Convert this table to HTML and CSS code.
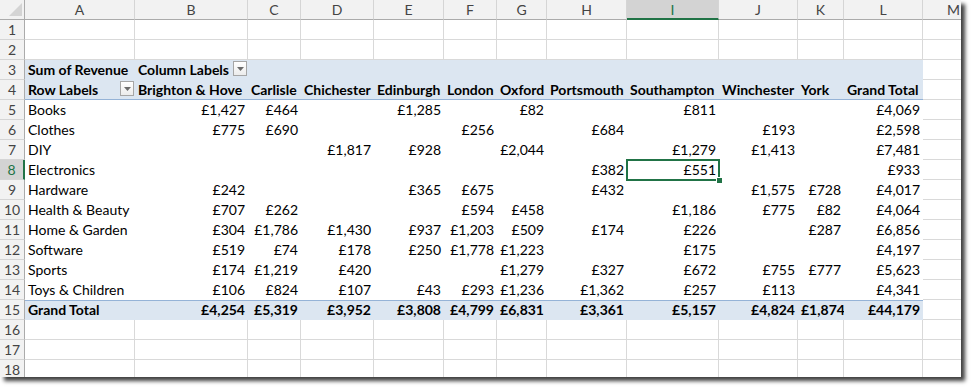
FILE: index.html
```html
<!DOCTYPE html>
<html lang="en">
<head>
<meta charset="utf-8">
<title>Pivot table – Sum of Revenue</title>
<link rel="stylesheet" href="styles.css">
</head>
<body>
<div class="sheet">
  <div class="row hrow">
    <div class="corner"><svg width="25" height="20" viewBox="0 0 25 20"><polygon points="22,3 22,16 9,16" fill="#d4d4d4"/></svg></div>
    <div class="ch">A</div><div class="ch">B</div><div class="ch">C</div><div class="ch">D</div><div class="ch">E</div><div class="ch">F</div><div class="ch">G</div><div class="ch">H</div><div class="ch ch-sel">I</div><div class="ch">J</div><div class="ch">K</div><div class="ch">L</div><div class="ch">M</div>
  </div>

  <div class="row"><div class="rh">1</div><div class="c"></div><div class="c"></div><div class="c"></div><div class="c"></div><div class="c"></div><div class="c"></div><div class="c"></div><div class="c"></div><div class="c"></div><div class="c"></div><div class="c"></div><div class="c"></div><div class="c"></div></div>
  <div class="row"><div class="rh">2</div><div class="c"></div><div class="c"></div><div class="c"></div><div class="c"></div><div class="c"></div><div class="c"></div><div class="c"></div><div class="c"></div><div class="c"></div><div class="c"></div><div class="c"></div><div class="c"></div><div class="c"></div></div>

  <div class="row"><div class="rh">3</div>
    <div class="b bold">Sum of Revenue</div>
    <div class="b bold flexcell">Column Labels<span class="dd"><svg width="7" height="4" viewBox="0 0 7 4"><polygon points="0,0 7,0 3.5,4" fill="#6b6b6b"/></svg></span></div>
    <div class="b"></div><div class="b"></div><div class="b"></div><div class="b"></div><div class="b"></div><div class="b"></div><div class="b"></div><div class="b"></div><div class="b"></div><div class="b"></div><div class="c"></div>
  </div>
  <div class="row"><div class="rh">4</div>
    <div class="b hb bold flexcell">Row Labels<span class="dd"><svg width="7" height="4" viewBox="0 0 7 4"><polygon points="0,0 7,0 3.5,4" fill="#6b6b6b"/></svg></span></div>
    <div class="b hb bold">Brighton &amp; Hove</div><div class="b hb bold">Carlisle</div><div class="b hb bold">Chichester</div><div class="b hb bold">Edinburgh</div><div class="b hb bold">London</div><div class="b hb bold">Oxford</div><div class="b hb bold">Portsmouth</div><div class="b hb bold">Southampton</div><div class="b hb bold">Winchester</div><div class="b hb bold">York</div><div class="b hb bold">Grand Total</div><div class="c"></div>
  </div>

  <div class="row"><div class="rh">5</div><div class="p">Books</div><div class="p n">£1,427</div><div class="p n">£464</div><div class="p n"></div><div class="p n">£1,285</div><div class="p n"></div><div class="p n">£82</div><div class="p n"></div><div class="p n">£811</div><div class="p n"></div><div class="p n"></div><div class="p n">£4,069</div><div class="c"></div></div>
  <div class="row"><div class="rh">6</div><div class="p">Clothes</div><div class="p n">£775</div><div class="p n">£690</div><div class="p n"></div><div class="p n"></div><div class="p n">£256</div><div class="p n"></div><div class="p n">£684</div><div class="p n"></div><div class="p n">£193</div><div class="p n"></div><div class="p n">£2,598</div><div class="c"></div></div>
  <div class="row"><div class="rh">7</div><div class="p">DIY</div><div class="p n"></div><div class="p n"></div><div class="p n">£1,817</div><div class="p n">£928</div><div class="p n"></div><div class="p n">£2,044</div><div class="p n"></div><div class="p n">£1,279</div><div class="p n">£1,413</div><div class="p n"></div><div class="p n">£7,481</div><div class="c"></div></div>
  <div class="row"><div class="rh rh-sel">8</div><div class="p">Electronics</div><div class="p n"></div><div class="p n"></div><div class="p n"></div><div class="p n"></div><div class="p n"></div><div class="p n"></div><div class="p n">£382</div><div class="p n active">£551<span class="sel"><span class="handle"></span></span></div><div class="p n"></div><div class="p n"></div><div class="p n">£933</div><div class="c"></div></div>
  <div class="row"><div class="rh">9</div><div class="p">Hardware</div><div class="p n">£242</div><div class="p n"></div><div class="p n"></div><div class="p n">£365</div><div class="p n">£675</div><div class="p n"></div><div class="p n">£432</div><div class="p n"></div><div class="p n">£1,575</div><div class="p n">£728</div><div class="p n">£4,017</div><div class="c"></div></div>
  <div class="row"><div class="rh">10</div><div class="p">Health &amp; Beauty</div><div class="p n">£707</div><div class="p n">£262</div><div class="p n"></div><div class="p n"></div><div class="p n">£594</div><div class="p n">£458</div><div class="p n"></div><div class="p n">£1,186</div><div class="p n">£775</div><div class="p n">£82</div><div class="p n">£4,064</div><div class="c"></div></div>
  <div class="row"><div class="rh">11</div><div class="p">Home &amp; Garden</div><div class="p n">£304</div><div class="p n">£1,786</div><div class="p n">£1,430</div><div class="p n">£937</div><div class="p n">£1,203</div><div class="p n">£509</div><div class="p n">£174</div><div class="p n">£226</div><div class="p n"></div><div class="p n">£287</div><div class="p n">£6,856</div><div class="c"></div></div>
  <div class="row"><div class="rh">12</div><div class="p">Software</div><div class="p n">£519</div><div class="p n">£74</div><div class="p n">£178</div><div class="p n">£250</div><div class="p n">£1,778</div><div class="p n">£1,223</div><div class="p n"></div><div class="p n">£175</div><div class="p n"></div><div class="p n"></div><div class="p n">£4,197</div><div class="c"></div></div>
  <div class="row"><div class="rh">13</div><div class="p">Sports</div><div class="p n">£174</div><div class="p n">£1,219</div><div class="p n">£420</div><div class="p n"></div><div class="p n"></div><div class="p n">£1,279</div><div class="p n">£327</div><div class="p n">£672</div><div class="p n">£755</div><div class="p n">£777</div><div class="p n">£5,623</div><div class="c"></div></div>
  <div class="row"><div class="rh">14</div><div class="p">Toys &amp; Children</div><div class="p n">£106</div><div class="p n">£824</div><div class="p n">£107</div><div class="p n">£43</div><div class="p n">£293</div><div class="p n">£1,236</div><div class="p n">£1,362</div><div class="p n">£257</div><div class="p n">£113</div><div class="p n"></div><div class="p n">£4,341</div><div class="c"></div></div>

  <div class="row"><div class="rh">15</div><div class="b tb bold">Grand Total</div><div class="b tb bold n">£4,254</div><div class="b tb bold n">£5,319</div><div class="b tb bold n">£3,952</div><div class="b tb bold n">£3,808</div><div class="b tb bold n">£4,799</div><div class="b tb bold n">£6,831</div><div class="b tb bold n">£3,361</div><div class="b tb bold n">£5,157</div><div class="b tb bold n">£4,824</div><div class="b tb bold n">£1,874</div><div class="b tb bold n">£44,179</div><div class="c"></div></div>

  <div class="row"><div class="rh">16</div><div class="c"></div><div class="c"></div><div class="c"></div><div class="c"></div><div class="c"></div><div class="c"></div><div class="c"></div><div class="c"></div><div class="c"></div><div class="c"></div><div class="c"></div><div class="c"></div><div class="c"></div></div>
  <div class="row"><div class="rh">17</div><div class="c"></div><div class="c"></div><div class="c"></div><div class="c"></div><div class="c"></div><div class="c"></div><div class="c"></div><div class="c"></div><div class="c"></div><div class="c"></div><div class="c"></div><div class="c"></div><div class="c"></div></div>
  <div class="row"><div class="rh">18</div><div class="c"></div><div class="c"></div><div class="c"></div><div class="c"></div><div class="c"></div><div class="c"></div><div class="c"></div><div class="c"></div><div class="c"></div><div class="c"></div><div class="c"></div><div class="c"></div><div class="c"></div></div>
</div>
</body>
</html>
```

FILE: styles.css
```css
* {
  box-sizing: border-box;
}

html, body {
  margin: 0;
  padding: 0;
  background: #ffffff;
}

body {
  min-height: 392px;
  font-family: "Lato", "Liberation Sans", sans-serif;
  font-size: 14px;
  color: #000000;
}

.sheet {
  width: 961px;
  height: 377px;
  overflow: hidden;
  background: #ffffff;
  box-shadow: 4px 4px 4px rgba(0, 0, 0, 0.75);
}

.row {
  display: grid;
  grid-template-columns: 25px 110px 113px 53px 73px 70px 53px 50px 80px 92px 79px 46px 79px 62px;
  height: 20px;
}

.row > div {
  height: 20px;
  line-height: 19px;
  padding: 0 3px;
  white-space: nowrap;
}

/* header row */
.corner {
  background: #f2f2f2;
  border-right: 1px solid #ababab;
  border-bottom: 1px solid #ababab;
  padding: 0 !important;
}

.corner svg {
  display: block;
}

.ch {
  background: #f2f2f2;
  border-right: 1px solid #d5d5d5;
  border-bottom: 1px solid #ababab;
  text-align: center;
  color: #444444;
  font-size: 14px;
}

.ch-sel {
  background: #d3d3d3;
  border-bottom: 2px solid #217346;
  color: #217346;
}

/* row headers */
.rh {
  background: #f2f2f2;
  border-right: 1px solid #ababab;
  border-bottom: 1px solid #d5d5d5;
  text-align: center;
  color: #444444;
  padding: 0 !important;
}

.rh-sel {
  background: #d3d3d3;
  border-right: 2px solid #217346;
  color: #217346;
}

/* normal cells with gridlines */
.c {
  border-right: 1px solid #d9d9d9;
  border-bottom: 1px solid #d9d9d9;
}

/* pivot body cells */
.p {
  background: #ffffff;
}

/* pivot header band */
.b {
  background: #dce6f1;
}

.hb {
  border-bottom: 1px solid #95b3d7;
}

.tb {
  border-top: 1px solid #95b3d7;
  line-height: 18px !important;
}

.bold {
  font-weight: 700;
}

.n {
  text-align: right;
}

.flexcell {
  display: flex;
  align-items: flex-start;
  padding-right: 1px !important;
}

.dd {
  margin-left: auto;
  margin-top: 1px;
  width: 14px;
  height: 15px;
  border: 1px solid #a6a6a6;
  background: linear-gradient(#ffffff, #ececec);
  display: flex;
  align-items: center;
  justify-content: center;
}

.dd svg {
  display: block;
}

.active {
  position: relative;
}

.sel {
  position: absolute;
  top: -1px;
  left: -1px;
  right: -1px;
  bottom: -1px;
  border: 2px solid #217346;
}

.handle {
  position: absolute;
  right: -5px;
  bottom: -5px;
  width: 7px;
  height: 7px;
  background: #217346;
  border: 1px solid #ffffff;
}
```
